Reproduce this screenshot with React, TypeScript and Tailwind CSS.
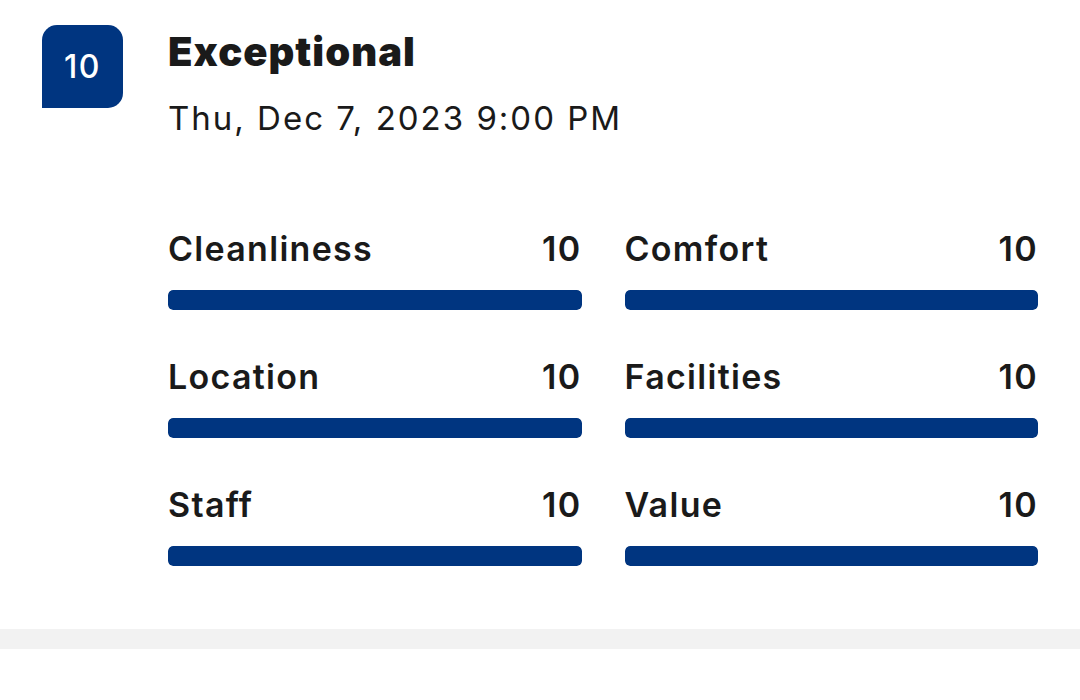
import React from "react";

const SCORES = [
  { label: "Cleanliness", value: 10 },
  { label: "Comfort", value: 10 },
  { label: "Location", value: 10 },
  { label: "Facilities", value: 10 },
  { label: "Staff", value: 10 },
  { label: "Value", value: 10 },
];

function ScoreRow({ label, value }: { label: string; value: number }) {
  return (
    <div className="flex flex-col">
      <div className="flex items-baseline justify-between text-[34px] leading-[34px] font-semibold tracking-[1.3px] text-[#1a1a1a]">
        <span>{label}</span>
        <span>{value}</span>
      </div>
      <div className="mt-[24px] h-[20px] rounded-[5px] bg-[#e6e6e6] overflow-hidden">
        <div className="h-full rounded-[5px] bg-[#003580]" style={{ width: `${value * 10}%` }} />
      </div>
    </div>
  );
}

export default function App() {
  return (
    <div
      className="w-[1080px] h-[700px] bg-white overflow-hidden"
      style={{ fontFamily: "Inter, 'Liberation Sans', sans-serif" }}
    >
      <div className="flex pl-[42px] pr-[42px] pt-[25px] h-[604px]">
        <div className="w-[81px] h-[83px] shrink-0 flex items-center justify-center bg-[#003580] rounded-t-[15px] rounded-br-[15px]">
          <span className="text-[32px] leading-none font-medium text-white tracking-[1.5px]">10</span>
        </div>
        <div className="ml-[45px] flex-1">
          <div className="mt-[7px] text-[40px] leading-[40px] font-black text-[#1a1a1a] tracking-[1px]">
            Exceptional
          </div>
          <div className="mt-[30px] text-[33px] leading-[33px] text-[#1a1a1a] tracking-[2px]">
            Thu, Dec 7, 2023 9:00 PM
          </div>
          <div className="mt-[97px] grid grid-cols-2 gap-x-[43px] gap-y-[50px]">
            {SCORES.map((s) => (
              <ScoreRow key={s.label} label={s.label} value={s.value} />
            ))}
          </div>
        </div>
      </div>
      <div className="mt-[25px] h-[20px] bg-[#f2f2f2]" />
    </div>
  );
}
